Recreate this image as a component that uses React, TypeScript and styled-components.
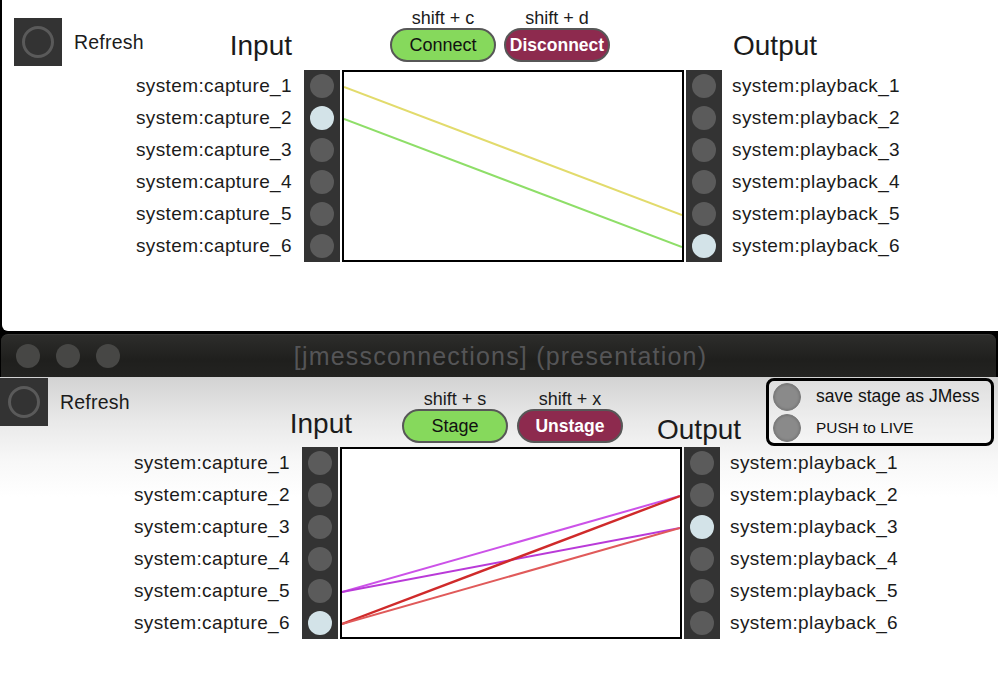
import React from 'react';
import styled, { createGlobalStyle } from 'styled-components';

const GlobalStyle = createGlobalStyle`
  html, body { margin: 0; padding: 0; background: #000; }
  body {
    width: 998px; height: 692px; overflow: hidden;
    font-family: "Liberation Sans", Arial, Helvetica, sans-serif;
    color: #1b1b1b;
  }
  #root { height: 692px; }
`;

const Screen = styled.div`
  display: flex;
  flex-direction: column;
  height: 692px;
  overflow: hidden;
  background: #000;
`;

const TopWindow = styled.section`
  flex: 0 0 331px;
  margin-left: 2px;
  background: #fff;
  border-bottom-left-radius: 6px;
  overflow: hidden;
`;

const BottomWindow = styled.section`
  flex: 1;
  margin-top: 3px;
  display: flex;
  flex-direction: column;
  overflow: hidden;
`;

const TitleBar = styled.header`
  flex: 0 0 43px;
  margin: 0 2px 0 1px;
  display: flex;
  align-items: center;
  padding-left: 15px;
  border-radius: 7px 7px 0 0;
  background: linear-gradient(#2d2d2b, #1f1f1d 60%, #232321);
  border-top: 1px solid #3a3a38;
  box-sizing: border-box;
`;

const Lights = styled.div`
  display: flex;
  gap: 16px;
  width: 105px;
`;

const Light = styled.span`
  width: 24px;
  height: 24px;
  border-radius: 50%;
  background: #474745;
`;

const WindowTitle = styled.div`
  flex: 1;
  text-align: center;
  padding-right: 116px;
  font-size: 25px;
  letter-spacing: 1.2px;
  color: #555557;
  white-space: nowrap;
`;

const BottomContent = styled.div`
  flex: 1;
  background: linear-gradient(#d3d3d3 0px, #e9e9e9 45px, #f8f8f8 85px, #fff 120px);
`;

const Patch = styled.div`
  display: grid;
  grid-template-columns: 302px 36px 346px 36px 1fr;
  grid-template-rows: 70px 192px;
`;

const HeadLeft = styled.div`
  display: flex;
  justify-content: space-between;
  align-items: flex-start;
  min-width: 0;
`;

const HeadRight = styled.div`
  grid-column: 2 / -1;
  display: flex;
  align-items: flex-start;
`;

const RefreshGroup = styled.div<{ $x: number; $y: number }>`
  display: flex;
  align-items: center;
  gap: 12px;
  margin-left: ${p => p.$x}px;
  margin-top: ${p => p.$y}px;
`;

const RefreshTile = styled.div`
  width: 48px;
  height: 48px;
  background: #333;
  display: flex;
  align-items: center;
  justify-content: center;
`;

const RefreshLabel = styled.span`
  font-size: 19.5px;
  letter-spacing: 0.2px;
  color: #1b1b1b;
`;

const Title = styled.div<{ $bottom: number; $left?: number; $right?: number }>`
  align-self: flex-end;
  margin-bottom: ${p => p.$bottom}px;
  margin-left: ${p => p.$left ?? 0}px;
  margin-right: ${p => p.$right ?? 0}px;
  font-size: 28px;
  line-height: 32px;
  color: #1b1b1b;
  white-space: nowrap;
`;

const ButtonGroup = styled.div<{ $x: number; $y: number; $gap: number }>`
  display: flex;
  gap: ${p => p.$gap}px;
  margin-left: ${p => p.$x}px;
  margin-top: ${p => p.$y}px;
`;

const Shortcut = styled.div`
  display: flex;
  flex-direction: column;
  align-items: center;
`;

const ShortcutKey = styled.span`
  font-size: 18px;
  line-height: 20px;
  color: #1b1b1b;
`;

const Pill = styled.button<{ $tone: 'go' | 'stop' }>`
  width: 106px;
  height: 34px;
  box-sizing: border-box;
  border-radius: 17px;
  border: 2px solid #575757;
  padding: 0;
  font-family: inherit;
  font-size: ${p => (p.$tone === 'go' ? '18px' : '17.5px')};
  font-weight: ${p => (p.$tone === 'go' ? 400 : 700)};
  color: ${p => (p.$tone === 'go' ? '#111' : '#fff')};
  background: ${p => (p.$tone === 'go' ? '#86d95c' : '#8d2a4e')};
  cursor: pointer;
`;

const JmessBox = styled.div<{ $left: number }>`
  margin-left: ${p => p.$left}px;
  margin-top: 1px;
  width: 228px;
  height: 68px;
  flex-shrink: 0;
  box-sizing: border-box;
  border: 3px solid #000;
  border-radius: 8px;
  padding: 0 0 0 4px;
  display: flex;
  flex-direction: column;
  justify-content: center;
  background: rgba(255, 255, 255, 0.25);
`;

const JmessRow = styled.div`
  height: 31px;
  display: flex;
  align-items: center;
  gap: 15px;
`;

const JmessDot = styled.span`
  width: 28px;
  height: 28px;
  border-radius: 50%;
  box-sizing: border-box;
  background: #8a8a8a;
  border: 1px solid #7a7a7a;
  box-shadow: inset 0 0 3px rgba(0, 0, 0, 0.25);
`;

const JmessText = styled.span<{ $size: number }>`
  font-size: ${p => p.$size}px;
  color: #111;
  white-space: nowrap;
`;

const LabelColumn = styled.div<{ $side: 'left' | 'right' }>`
  display: flex;
  flex-direction: column;
  padding-left: ${p => (p.$side === 'right' ? 10 : 0)}px;
  padding-right: ${p => (p.$side === 'left' ? 12 : 0)}px;
  text-align: ${p => (p.$side === 'left' ? 'right' : 'left')};
`;

const PortLabel = styled.div`
  height: 32px;
  line-height: 31px;
  font-size: 19px;
  letter-spacing: 0.38px;
  color: #1b1b1b;
  white-space: nowrap;
`;

const JackColumn = styled.div`
  background: #333;
  display: grid;
  grid-auto-rows: 32px;
  place-items: center;
`;

const Jack = styled.span<{ $active: boolean }>`
  width: 24px;
  height: 24px;
  border-radius: 50%;
  background: ${p => (p.$active ? '#d3e3e8' : '#5b5b5b')};
`;

const Canvas = styled.div`
  margin: 0 2px;
  box-sizing: border-box;
  border: 2px solid #000;
  background: #fff;
  height: 192px;
`;

type Wire = { from: number; to: number; color: string; width?: number };

const ringIcon = (
  <svg width="34" height="34" viewBox="0 0 34 34">
    <circle cx="17" cy="17" r="14.5" fill="none" stroke="#5a5a5a" strokeWidth="3" />
  </svg>
);

function Refresh({ x, y }: { x: number; y: number }) {
  return (
    <RefreshGroup $x={x} $y={y}>
      <RefreshTile>{ringIcon}</RefreshTile>
      <RefreshLabel>Refresh</RefreshLabel>
    </RefreshGroup>
  );
}

function Wires({ wires }: { wires: Wire[] }) {
  return (
    <svg width="338" height="188" viewBox="0 0 338 188" style={{ display: 'block' }}>
      {wires.map((w, i) => (
        <line
          key={i}
          x1={0}
          y1={15 + 32 * w.from}
          x2={338}
          y2={15 + 32 * w.to}
          stroke={w.color}
          strokeWidth={w.width ?? 2}
        />
      ))}
    </svg>
  );
}

const rows = [1, 2, 3, 4, 5, 6];

function PortGrid({
  activeIn,
  activeOut,
  wires,
}: {
  activeIn: number;
  activeOut: number;
  wires: Wire[];
}) {
  return (
    <>
      <LabelColumn $side="left">
        {rows.map(n => (
          <PortLabel key={n}>system:capture_{n}</PortLabel>
        ))}
      </LabelColumn>
      <JackColumn>
        {rows.map((n, i) => (
          <Jack key={n} $active={i === activeIn} />
        ))}
      </JackColumn>
      <Canvas>
        <Wires wires={wires} />
      </Canvas>
      <JackColumn>
        {rows.map((n, i) => (
          <Jack key={n} $active={i === activeOut} />
        ))}
      </JackColumn>
      <LabelColumn $side="right">
        {rows.map(n => (
          <PortLabel key={n}>system:playback_{n}</PortLabel>
        ))}
      </LabelColumn>
    </>
  );
}

export default function App() {
  return (
    <Screen>
      <GlobalStyle />
      <TopWindow>
        <Patch>
          <HeadLeft>
            <Refresh x={12} y={18} />
            <Title $bottom={8} $right={12}>Input</Title>
          </HeadLeft>
          <HeadRight>
            <ButtonGroup $x={86} $y={8} $gap={8}>
              <Shortcut>
                <ShortcutKey>shift + c</ShortcutKey>
                <Pill $tone="go">Connect</Pill>
              </Shortcut>
              <Shortcut>
                <ShortcutKey>shift + d</ShortcutKey>
                <Pill $tone="stop">Disconnect</Pill>
              </Shortcut>
            </ButtonGroup>
            <Title $bottom={8} $left={123}>Output</Title>
          </HeadRight>
          <PortGrid
            activeIn={1}
            activeOut={5}
            wires={[
              { from: 0, to: 4, color: '#e2db6c' },
              { from: 1, to: 5, color: '#8ede68' },
            ]}
          />
        </Patch>
      </TopWindow>
      <BottomWindow>
        <TitleBar>
          <Lights>
            <Light />
            <Light />
            <Light />
          </Lights>
          <WindowTitle>[jmessconnections] (presentation)</WindowTitle>
        </TitleBar>
        <BottomContent>
          <Patch>
            <HeadLeft>
              <Refresh x={0} y={1} />
              <Title $bottom={7} $right={-50}>Input</Title>
            </HeadLeft>
            <HeadRight>
              <ButtonGroup $x={100} $y={12} $gap={9}>
                <Shortcut>
                  <ShortcutKey>shift + s</ShortcutKey>
                  <Pill $tone="go">Stage</Pill>
                </Shortcut>
                <Shortcut>
                  <ShortcutKey>shift + x</ShortcutKey>
                  <Pill $tone="stop">Unstage</Pill>
                </Shortcut>
              </ButtonGroup>
              <Title $bottom={1} $left={34}>Output</Title>
              <JmessBox $left={25}>
                <JmessRow>
                  <JmessDot />
                  <JmessText $size={17.5}>save stage as JMess</JmessText>
                </JmessRow>
                <JmessRow>
                  <JmessDot />
                  <JmessText $size={15.4}>PUSH to LIVE</JmessText>
                </JmessRow>
              </JmessBox>
            </HeadRight>
            <PortGrid
              activeIn={5}
              activeOut={2}
              wires={[
                { from: 4, to: 1, color: '#cc52e8' },
                { from: 4, to: 2, color: '#b93ad8' },
                { from: 5, to: 1, color: '#cf2a2a', width: 2.4 },
                { from: 5, to: 2, color: '#e05a5a' },
              ]}
            />
          </Patch>
        </BottomContent>
      </BottomWindow>
    </Screen>
  );
}
